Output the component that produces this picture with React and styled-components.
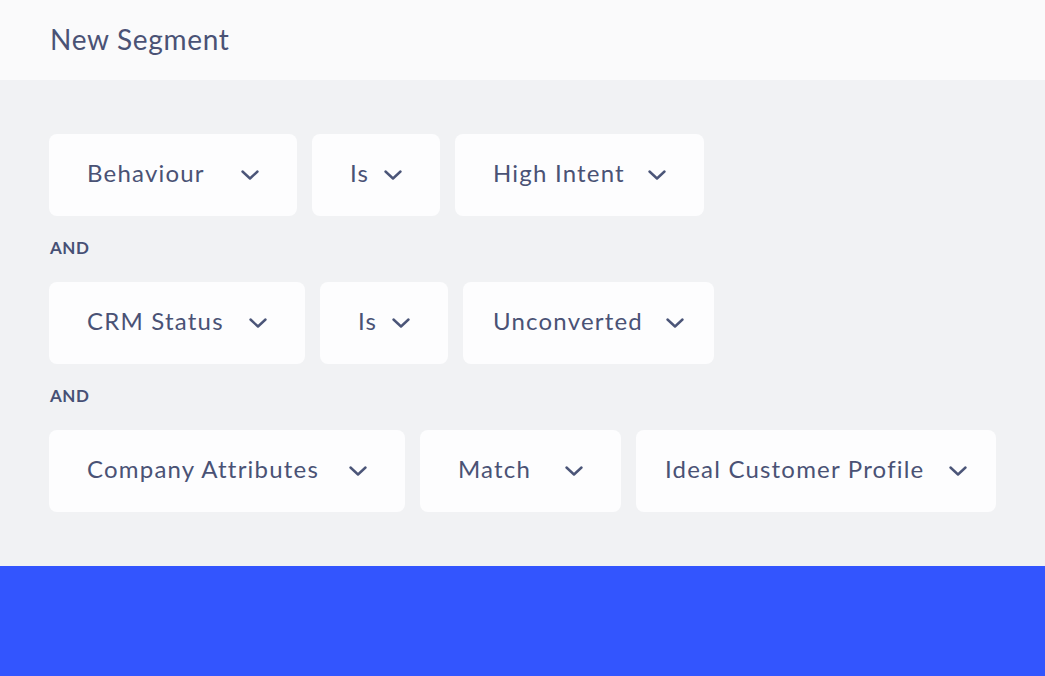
import React from "react";
import styled, { createGlobalStyle } from "styled-components";

const Global = createGlobalStyle`
  html, body {
    margin: 0;
    padding: 0;
    background: #f1f2f4;
  }
  body {
    font-family: Lato, "Noto Sans", sans-serif;
  }
`

const Page = styled.div`
  width: 1045px;
  height: 676px;
  display: flex;
  flex-direction: column;
  background: #f1f2f4;
  overflow: hidden;
`
const Header = styled.div`
  height: 80px;
  background: #fafafb;
  padding: 0 50px 2px;
  display: flex;
  align-items: center;
  box-sizing: border-box;
`
const Title = styled.h1`
  margin: 0;
  font-size: 28px;
  font-weight: 400;
  color: #4a5275;
  letter-spacing: 0.7px;
`
const Body = styled.div`
  flex: 1;
  padding: 54px 49px 0;
  display: flex;
  flex-direction: column;
`
const Row = styled.div`
  display: flex;
  gap: 15px;
`
const Select = styled.div`
  width: ${p => p.w}px;
  height: 82px;
  box-sizing: border-box;
  padding: 0 ${p => p.pad || 38}px;
  background: #fdfdfe;
  border-radius: 8px;
  display: flex;
  align-items: center;
  justify-content: space-between;
  font-size: 24px;
  letter-spacing: 1.2px;
  color: #4a5275;
`
const Label = styled.span`
  margin-bottom: 5px;
`
const And = styled.div`
  font-size: 17px;
  font-weight: 700;
  letter-spacing: 0.5px;
  color: #465075;
  height: 66px;
  display: flex;
  align-items: center;
  padding: 0 0 4px 1px;
  box-sizing: border-box;
`
const Footer = styled.div`
  height: 110px;
  background: #3355fe;
`

const Chevron = () => (
  <svg width="18" height="10" viewBox="0 0 18 10" fill="none">
    <path d="M1.5 1.5 L9 8.5 L16.5 1.5" stroke="#4b5578" strokeWidth="2.4" strokeLinecap="round" strokeLinejoin="round" />
  </svg>
)

const rows = [
  [["Behaviour", 248], ["Is", 128], ["High Intent", 249]],
  [["CRM Status", 256], ["Is", 128], ["Unconverted", 251, 30]],
  [["Company Attributes", 356], ["Match", 201], ["Ideal Customer Profile", 360, 29]],
]

function App() {
  return (
    <Page>
      <Global />
      <Header>
        <Title>New Segment</Title>
      </Header>
      <Body>
        {rows.map((row, i) => (
          <React.Fragment key={i}>
            {i > 0 && <And>AND</And>}
            <Row>
              {row.map(([label, w, pad]) => (
                <Select key={label} w={w} pad={pad}>
                  <Label>{label}</Label>
                  <Chevron />
                </Select>
              ))}
            </Row>
          </React.Fragment>
        ))}
      </Body>
      <Footer />
    </Page>
  )
}

export default App
